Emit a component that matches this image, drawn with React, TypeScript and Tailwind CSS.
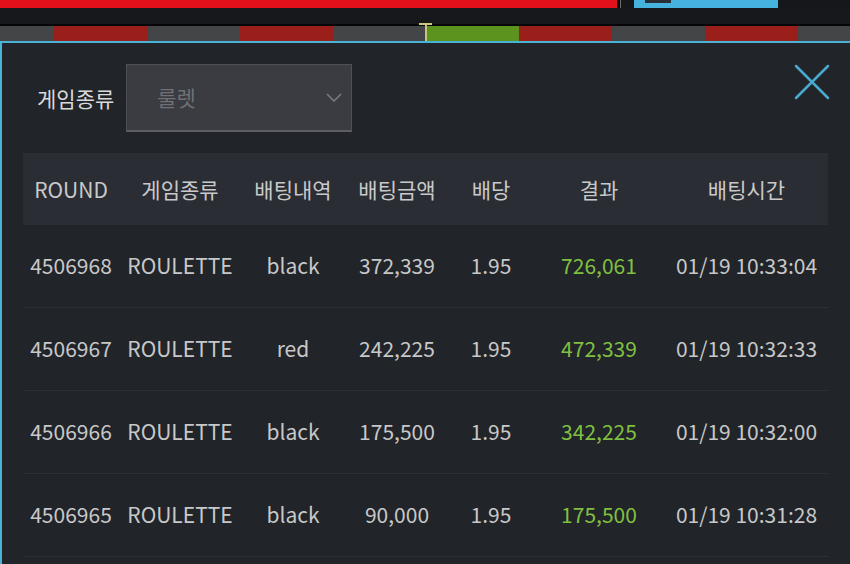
import React from "react";

type Row = {
  round: string;
  game: string;
  pick: string;
  amount: string;
  odds: string;
  result: string;
  time: string;
};

const rows: Row[] = [
  { round: "4506968", game: "ROULETTE", pick: "black", amount: "372,339", odds: "1.95", result: "726,061", time: "01/19 10:33:04" },
  { round: "4506967", game: "ROULETTE", pick: "red", amount: "242,225", odds: "1.95", result: "472,339", time: "01/19 10:32:33" },
  { round: "4506966", game: "ROULETTE", pick: "black", amount: "175,500", odds: "1.95", result: "342,225", time: "01/19 10:32:00" },
  { round: "4506965", game: "ROULETTE", pick: "black", amount: "90,000", odds: "1.95", result: "175,500", time: "01/19 10:31:28" },
];

const headers = ["ROUND", "게임종류", "배팅내역", "배팅금액", "배당", "결과", "배팅시간"];

const cols = "grid grid-cols-[96px_122px_104px_104px_84px_132px_163px]";

// colour strip of recent results
const strip: { w: string; c: string }[] = [
  { w: "w-[54px]", c: "bg-[#444546]" },
  { w: "w-[94px]", c: "bg-[#9a1e1a]" },
  { w: "w-[92px]", c: "bg-[#444546]" },
  { w: "w-[93px]", c: "bg-[#9a1e1a]" },
  { w: "w-[93px]", c: "bg-[#444546]" },
  { w: "w-[93px]", c: "bg-[#5b931e]" },
  { w: "w-[93px]", c: "bg-[#9a1e1a]" },
  { w: "w-[93px]", c: "bg-[#444546]" },
  { w: "w-[93px]", c: "bg-[#9a1e1a]" },
  { w: "flex-1", c: "bg-[#444546]" },
];

export default function App() {
  return (
    <div
      className="w-[850px] h-[564px] overflow-hidden bg-[#15171a] flex flex-col"
      style={{ fontFamily: '"Noto Sans CJK KR", "Noto Sans", sans-serif' }}
    >
      {/* top bars */}
      <div className="h-[8px] flex shrink-0">
        <div className="w-[617px] bg-[#e0111b]" />
        <div className="w-[4px] bg-[#0a0a0a] border-r border-[#6a6a6a]" />
        <div className="w-[13px]" />
        <div className="w-[144px] bg-[#45b3dd] relative">
          <div className="absolute left-[11px] top-0 w-[26px] h-[3px] bg-[#2a2f36]" />
        </div>
      </div>
      <div className="h-[16px] shrink-0 bg-[#16181b]" />
      <div className="h-[2px] shrink-0 bg-[#050607]" />
      {/* result strip */}
      <div className="h-[15px] flex shrink-0 relative">
        {strip.map((s, i) => (
          <div key={i} className={`${s.w} ${s.c}`} />
        ))}
        <div className="absolute left-[419px] top-[-3px] w-[13px] h-[2px] bg-[#cfc77e]" />
        <div className="absolute left-[425px] top-[-1px] w-[2px] h-[16px] bg-[#c9c27a]" />
      </div>

      {/* history panel */}
      <div className="flex-1 bg-[#212429] border-t-2 border-l-2 border-[#4ab2d4] flex flex-col">
        <div className="flex justify-between items-start pt-[21px] pl-[35px] pr-[20px]">
          <div className="flex items-center">
            <span className="text-[21px] text-[#dadada] mr-[12px] leading-none">게임종류</span>
            <div className="w-[226px] h-[68px] bg-[#3a3c41] border border-[#4e5055] border-b-2 border-b-[#5c5e63] flex items-center justify-between pl-[30px] pr-[9px]">
              <span className="text-[21px] text-[#6f7176] leading-none">룰렛</span>
              <svg width="16" height="9" viewBox="0 0 16 9">
                <path d="M1 1 L8 8 L15 1" fill="none" stroke="#7a7c80" strokeWidth="1.5" />
              </svg>
            </div>
          </div>
          <svg width="36" height="36" viewBox="0 0 36 36" className="mt-0">
            <path d="M2 2 L34 34 M34 2 L2 34" stroke="#4aa9cf" strokeWidth="2.5" strokeLinecap="round" />
          </svg>
        </div>

        <div className="ml-[21px] mt-[21px] w-[805px]">
          <div className={`${cols} h-[72px] bg-[#2a2d34] items-center text-[21px] text-[#c9c9c9]`}>
            {headers.map((h) => (
              <div key={h} className="text-center leading-none">
                {h}
              </div>
            ))}
          </div>
          {rows.map((r) => (
            <div
              key={r.round}
              className={`${cols} h-[83px] border-b border-[#2d3035] items-center text-[21px] text-[#c8c8c8] leading-none pb-[2px]`}
            >
              <div className="text-center">{r.round}</div>
              <div className="text-center">{r.game}</div>
              <div className="text-center">{r.pick}</div>
              <div className="text-center">{r.amount}</div>
              <div className="text-center">{r.odds}</div>
              <div className="text-center text-[#80c040]">{r.result}</div>
              <div className="text-center">{r.time}</div>
            </div>
          ))}
        </div>
      </div>
    </div>
  );
}
